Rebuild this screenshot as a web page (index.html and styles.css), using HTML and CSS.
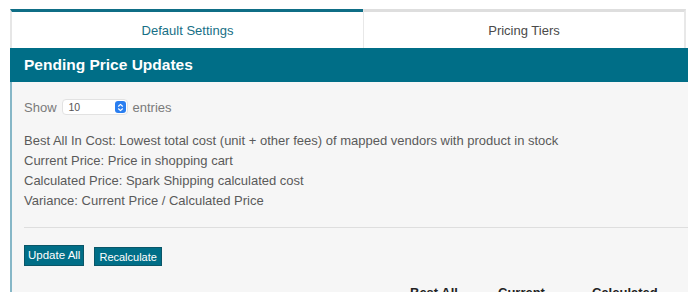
FILE: index.html
```html
<!DOCTYPE html>
<html>
<head>
<meta charset="utf-8">
<link rel="stylesheet" href="styles.css">
</head>
<body>
<div class="page">
  <div class="tabs">
    <div class="tab tab-active">Default Settings</div>
    <div class="tab tab-inactive">Pricing Tiers</div>
  </div>
  <div class="panel">
    <div class="panel-head">Pending Price Updates</div>
    <div class="panel-body">
      <div class="length">
        <span>Show</span>
        <span class="select"><span class="select-val">10</span><span class="stepper"><svg width="9" height="11" viewBox="0 0 9 11"><path d="M2.5 4.2 L4.5 2.4 L6.5 4.2 M2.5 6.8 L4.5 8.6 L6.5 6.8" fill="none" stroke="#fff" stroke-width="1.2" stroke-linecap="round" stroke-linejoin="round"/></svg></span></span>
        <span>entries</span>
      </div>
      <div class="legend">
        <div>Best All In Cost: Lowest total cost (unit + other fees) of mapped vendors with product in stock</div>
        <div>Current Price: Price in shopping cart</div>
        <div>Calculated Price: Spark Shipping calculated cost</div>
        <div>Variance: Current Price / Calculated Price</div>
      </div>
      <div class="rule"></div>
      <div class="actions">
        <button class="btn btn-big">Update All</button>
        <button class="btn btn-small">Recalculate</button>
      </div>
      <div class="thead">
        <span class="th th1">Best All</span>
        <span class="th th2">Current</span>
        <span class="th th3">Calculated</span>
      </div>
    </div>
  </div>
</div>
</body>
</html>
```

FILE: styles.css
```css
html, body {
  margin: 0;
  padding: 0;
  background: #fff;
  overflow: hidden;
}
body {
  font-family: "Liberation Sans", Arial, Helvetica, sans-serif;
  width: 688px;
  height: 292px;
}
.page {
  padding: 9px 0 0 10px;
  width: 700px;
}
.tabs {
  display: flex;
  height: 39px;
}
.tab {
  box-sizing: border-box;
  height: 39px;
  display: flex;
  align-items: center;
  justify-content: center;
  font-size: 13px;
  background: #fff;
  padding-top: 1px;
}
.tab-active {
  width: 353px;
  border-top: 3px solid #0f6e86;
  border-left: 2px solid #e6e6e6;
  color: #176f86;
}
.tab-inactive {
  width: 323px;
  border-top: 3px solid #dedede;
  border-left: 1px solid #e8e8e8;
  border-right: 2px solid #e8e8e8;
  color: #4a4a4a;
}
.panel {
  width: 690px;
}
.panel-head {
  height: 34px;
  background: #006e87;
  color: #fff;
  font-weight: bold;
  font-size: 15.5px;
  display: flex;
  align-items: center;
  padding-left: 14px;
}
.panel-body {
  background: #f6f6f6;
  border-left: 2px solid #86b7c7;
  padding: 17px 0 0 12px;
  height: 200px;
}
.length {
  display: flex;
  align-items: center;
  height: 16px;
  font-size: 13px;
  color: #7a7a7a;
}
.select {
  display: inline-flex;
  align-items: center;
  justify-content: space-between;
  box-sizing: border-box;
  width: 66px;
  height: 16px;
  margin: 0 5px 0 5px;
  background: #fff;
  border: 1px solid #e2e2e2;
  border-radius: 4px;
  padding: 0 1px 0 6px;
  font-size: 10.5px;
  color: #555;
}
.stepper {
  width: 11px;
  height: 12px;
  background: #2a7ef0;
  border-radius: 3px;
  display: flex;
  align-items: center;
  justify-content: center;
}
.legend {
  margin-top: 16px;
  font-size: 13px;
  line-height: 20px;
  color: #5a5a5a;
}
.rule {
  margin-top: 16px;
  height: 1px;
  background: #dedede;
}
.actions {
  margin-top: 17px;
  display: flex;
  align-items: flex-end;
  gap: 10px;
}
.btn {
  font-family: "Liberation Sans", Arial, sans-serif;
  background: #006e87;
  color: #fff;
  border: 1px solid #0a5668;
  border-radius: 0;
  margin: 0;
}
.btn-big {
  height: 21px;
  font-size: 11.5px;
  padding: 0 3px 2px;
}
.btn-small {
  height: 19px;
  font-size: 11px;
  padding: 0 4px;
}
.thead {
  position: relative;
  margin-top: 19px;
  height: 20px;
  font-weight: bold;
  font-size: 13px;
  color: #222;
}
.th {
  position: absolute;
  top: 0;
}
.th1 { left: 386px; }
.th2 { left: 474px; }
.th3 { left: 568px; }
```
